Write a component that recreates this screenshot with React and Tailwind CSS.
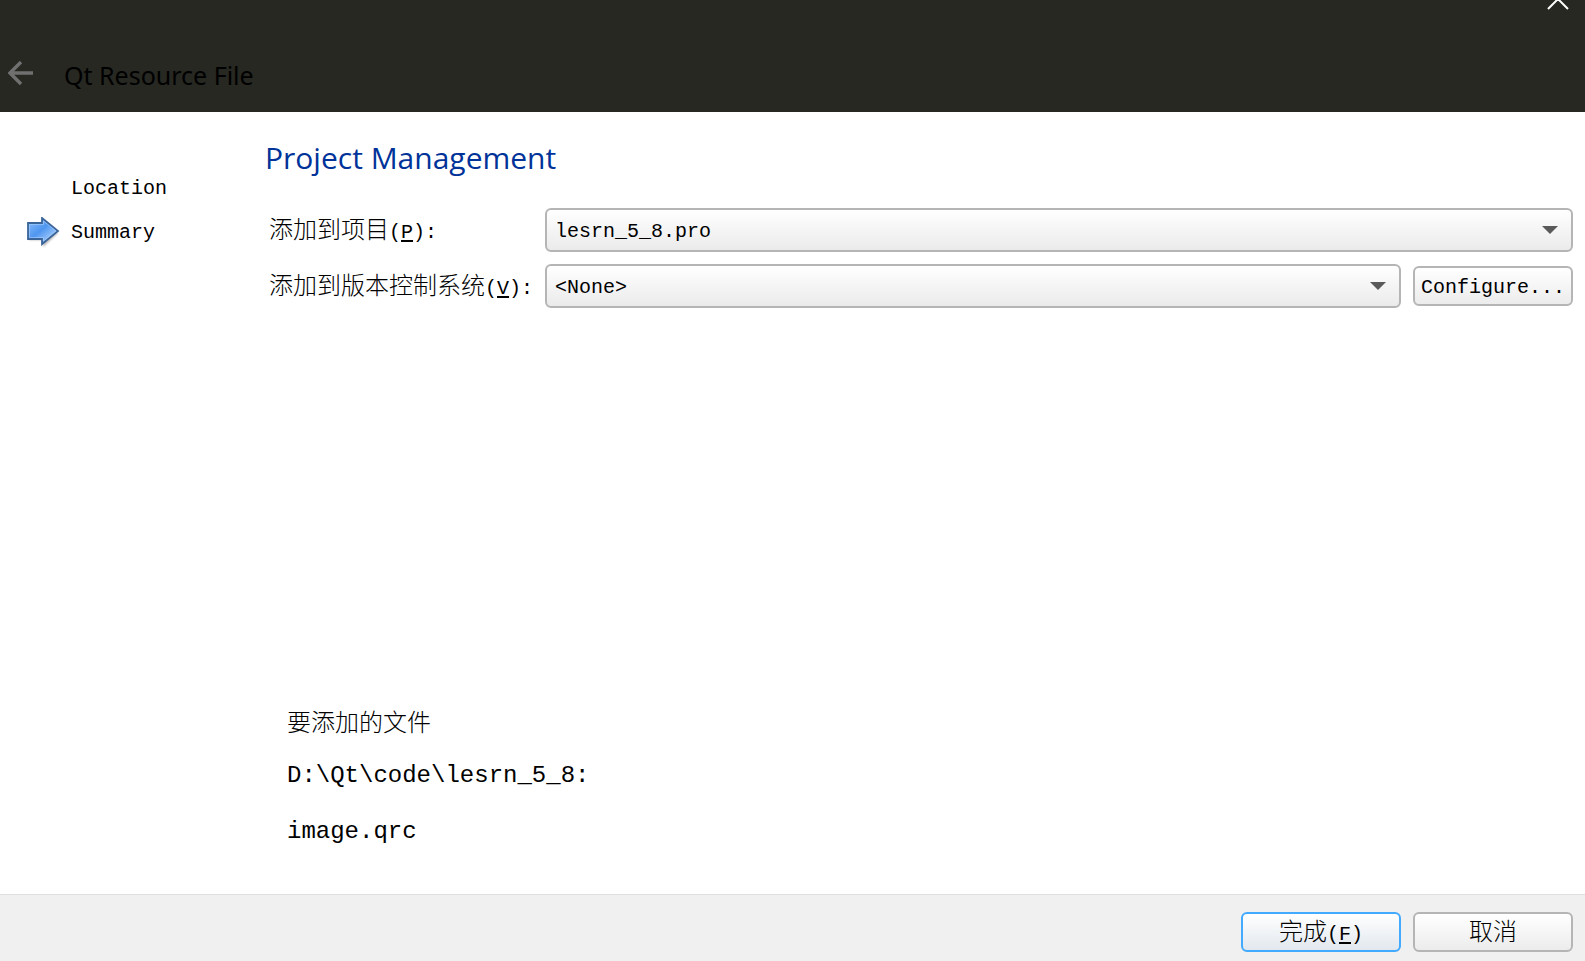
import React from "react";

const mono = "font-['Liberation_Mono','Noto_Sans_CJK_SC',monospace]";
const cjk = "text-2xl font-light font-['Noto_Sans_CJK_SC',sans-serif]";

function Mnemonic({ text, letter, suffix = "" }) {
  return (
    <>
      <span className={`${cjk} leading-6`}>{text}</span>
      <span className="leading-6">
        (<span className="underline decoration-2 underline-offset-2">{letter}</span>){suffix}
      </span>
    </>
  );
}

function Dropdown({ id, value }) {
  return (
    <div className="relative min-w-0 flex-1">
      <select
        id={id}
        defaultValue={value}
        className="block h-11 w-full appearance-none rounded-md border-2 border-[#b5b5b5] bg-linear-to-b from-white to-[#ebebeb] pt-1 pr-10 pl-2 text-xl text-black"
      >
        <option>{value}</option>
      </select>
      <svg className="pointer-events-none absolute top-4 right-[15px] h-3 w-4" viewBox="0 0 16 12" aria-hidden="true">
        <path d="M0 2H16L8 10Z" fill="#5a5a5a" />
      </svg>
    </div>
  );
}

function PushButton({ primary = false, children }) {
  return (
    <button
      type="button"
      className={`h-10 w-40 shrink-0 rounded-md border-2 bg-linear-to-b from-white text-center text-xl leading-6 whitespace-nowrap text-black ${
        primary ? "border-[#42aaff] to-[#e2e8ee]" : "border-[#b5b5b5] to-[#ececec]"
      }`}
    >
      {children}
    </button>
  );
}

function CurrentStepArrow() {
  return (
    <svg className="h-8 w-9" viewBox="0 0 36 32" aria-hidden="true">
      <defs>
        <linearGradient id="step" x1="0" y1="0" x2="1" y2="1">
          <stop offset="0" stopColor="#8fc0fb" />
          <stop offset="0.45" stopColor="#4f96f0" />
          <stop offset="0.7" stopColor="#8bbcf8" />
          <stop offset="1" stopColor="#5b9cec" />
        </linearGradient>
        <filter id="soft" x="-20%" y="-20%" width="140%" height="150%">
          <feGaussianBlur stdDeviation="1.3" />
        </filter>
      </defs>
      <path d="M3 10H17V5L32 16L17 30V23H3Z" fill="#000" opacity="0.3" filter="url(#soft)" />
      <path d="M2 6H16V1L32 14L16 27V22H2Z" fill="url(#step)" stroke="#3b6599" strokeWidth="1.8" />
      <path d="M3.5 7.5H17.5V4L30 14L17.5 24V20.5H3.5Z" fill="none" stroke="#a8cffc" strokeWidth="1" opacity="0.6" />
    </svg>
  );
}

export default function App() {
  return (
    <div className={`flex min-h-screen flex-col bg-white text-xl text-black ${mono}`}>
      <header className="flex h-28 items-start justify-between bg-[#272822] pr-[15px]">
        <div className="flex items-center gap-7 pt-[55px] pl-2">
          <button type="button" aria-label="Back" className="flex w-7 items-center">
            <svg className="h-7 w-7" viewBox="0 0 28 28" fill="none" stroke="#707070" strokeWidth="3.4" aria-hidden="true">
              <path d="M25 12H2M13 1L2 12L13 23" />
            </svg>
          </button>
          <h1 className="font-['Noto_Sans','Open_Sans',sans-serif] text-[25px] leading-10 text-black">
            Qt Resource File
          </h1>
        </div>
        <button type="button" aria-label="Close">
          <svg className="block h-3 w-6" viewBox="0 0 24 12" fill="none" stroke="#fff" strokeWidth="2" aria-hidden="true">
            <path d="M2 9L12 -1L22 9" />
          </svg>
        </button>
      </header>

      <div className="flex flex-1">
        <nav aria-label="Steps" className="w-[265px] shrink-0 pt-[55px] pl-[26px]">
          <ol>
            <li className="flex h-11 items-center pl-[45px]">Location</li>
            <li className="flex h-11 items-center gap-[9px]" aria-current="step">
              <CurrentStepArrow />
              Summary
            </li>
          </ol>
        </nav>

        <main className="flex min-w-0 flex-1 flex-col pt-6 pr-3">
          <h2 className="font-['Open_Sans','Noto_Sans',sans-serif] text-[30px] leading-11 text-[#003399]">
            Project Management
          </h2>
          <form className="mt-7 flex flex-col gap-3 pl-1">
            <div className="flex h-11 items-center">
              <label htmlFor="project" className="w-[276px] shrink-0 leading-6">
                <Mnemonic text="添加到项目" letter="P" suffix=":" />
              </label>
              <Dropdown id="project" value="lesrn_5_8.pro" />
            </div>
            <div className="flex h-11 items-center">
              <label htmlFor="vcs" className="w-[276px] shrink-0 leading-6">
                <Mnemonic text="添加到版本控制系统" letter="V" suffix=":" />
              </label>
              <div className="flex min-w-0 flex-1 items-center gap-3">
                <Dropdown id="vcs" value="<None>" />
                <PushButton>
                  <span className="block pt-1">Configure...</span>
                </PushButton>
              </div>
            </div>
          </form>

          <section className="mt-auto pb-[34px] pl-[22px]">
            <h3 className={`${cjk} leading-[54px]`}>要添加的文件</h3>
            <p className="text-2xl leading-14">D:\Qt\code\lesrn_5_8:</p>
            <p className="text-2xl leading-14">image.qrc</p>
          </section>
        </main>
      </div>

      <footer className="flex justify-end gap-3 border-t border-[#dfdfdf] bg-[#f0f0f0] pt-[17px] pr-3 pb-[9px]">
        <PushButton primary>
          <Mnemonic text="完成" letter="F" />
        </PushButton>
        <PushButton>
          <span className={`${cjk} leading-6`}>取消</span>
        </PushButton>
      </footer>
    </div>
  );
}
